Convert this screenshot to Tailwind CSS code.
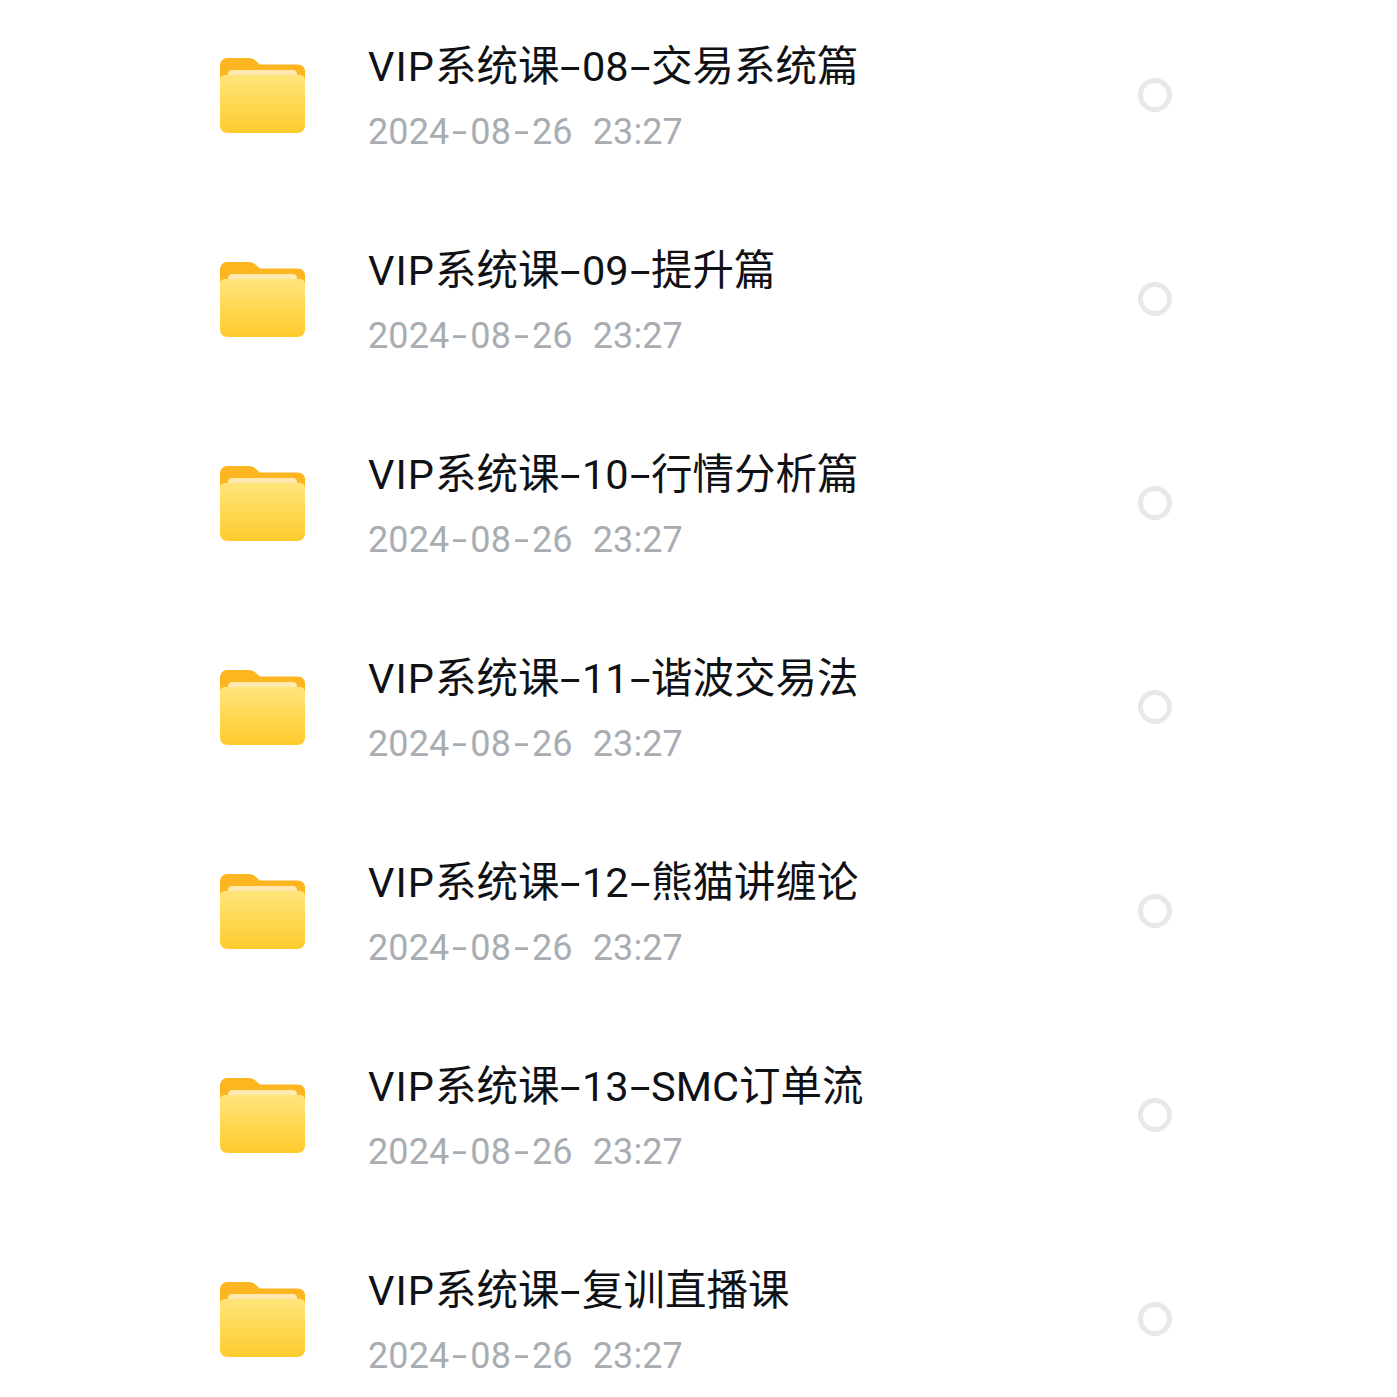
<!DOCTYPE html>
<html lang="zh-CN">
<head>
    <meta charset="UTF-8">
    <title>Files</title>
    <script src="https://cdn.jsdelivr.net/npm/@tailwindcss/browser@4"></script>
</head>
<body class="bg-white overflow-hidden font-['Roboto','Noto_Sans_CJK_SC',sans-serif]">
    <svg width="0" height="0" class="absolute">
        <defs>
            <linearGradient id="folder-front" x1="0" y1="0" x2="0" y2="1">
                <stop offset="0" stop-color="#ffe57a"/>
                <stop offset="1" stop-color="#ffcb2c"/>
            </linearGradient>
            <symbol id="folder" viewBox="0 0 85 75">
                <path d="M0 8C0 3.500 3 0 7.500 0H29C32 0 34 1 36 3L40 6.500H78C82 6.500 85 9.500 85 13V30H0Z" fill="#fdb520"/>
                <path d="M8 16C8 13 10 12 12 12H72C75 12 77 13 77 16V24H8Z" fill="#ffe9b0"/>
                <path d="M0 22C0 18.500 2 17 6 17H79C83 17 85 18.500 85 22V67C85 72 82 75 77 75H8C3 75 0 72 0 67Z" fill="url(#folder-front)"/>
            </symbol>
        </defs>
    </svg>

    <ul id="file-list" class="-mt-[7px]"></ul>

    <script>
        const titles = [
            "VIP系统课-08-交易系统篇",
            "VIP系统课-09-提升篇",
            "VIP系统课-10-行情分析篇",
            "VIP系统课-11-谐波交易法",
            "VIP系统课-12-熊猫讲缠论",
            "VIP系统课-13-SMC订单流",
            "VIP系统课-复训直播课"
        ];

        // Roboto's hyphen is much narrower than the one in the screenshot
        const titleDash = `<span class="inline-block w-[22.500px] text-center scale-x-[1.8]">-</span>`;
        const dateDash = `<span class="inline-block w-[21px] text-center scale-x-[1.5]">-</span>`;

        document.getElementById("file-list").innerHTML = titles.map((title) => {
            const head = title.split("-").join(titleDash).replace("VIP", `<span class="tracking-[1px]">VIP</span>`);
            return `
            <li class="h-[204px] flex items-center pl-[220px]">
                <svg class="w-[85px] h-[75px] shrink-0 blur-[0.6px]"><use href="#folder"/></svg>
                <div class="ml-[63px] w-[768px]">
                    <p class="pt-[5px] text-[41.500px] leading-[56px] text-[#0f1114]">${head}</p>
                    <p class="mt-[12px] text-[36px] leading-[50px] text-[#a8adb3] whitespace-pre tracking-[0.1px]">${["2024", "08", "26"].join(dateDash)}<span class="ml-[2px]">  23:27</span></p>
                </div>
                <span class="w-[34px] h-[34px] rounded-full border-[5px] border-[#e8e8e8] shrink-0 ml-[2px]"></span>
            </li>`;
        }).join("");
    </script>
</body>
</html>
